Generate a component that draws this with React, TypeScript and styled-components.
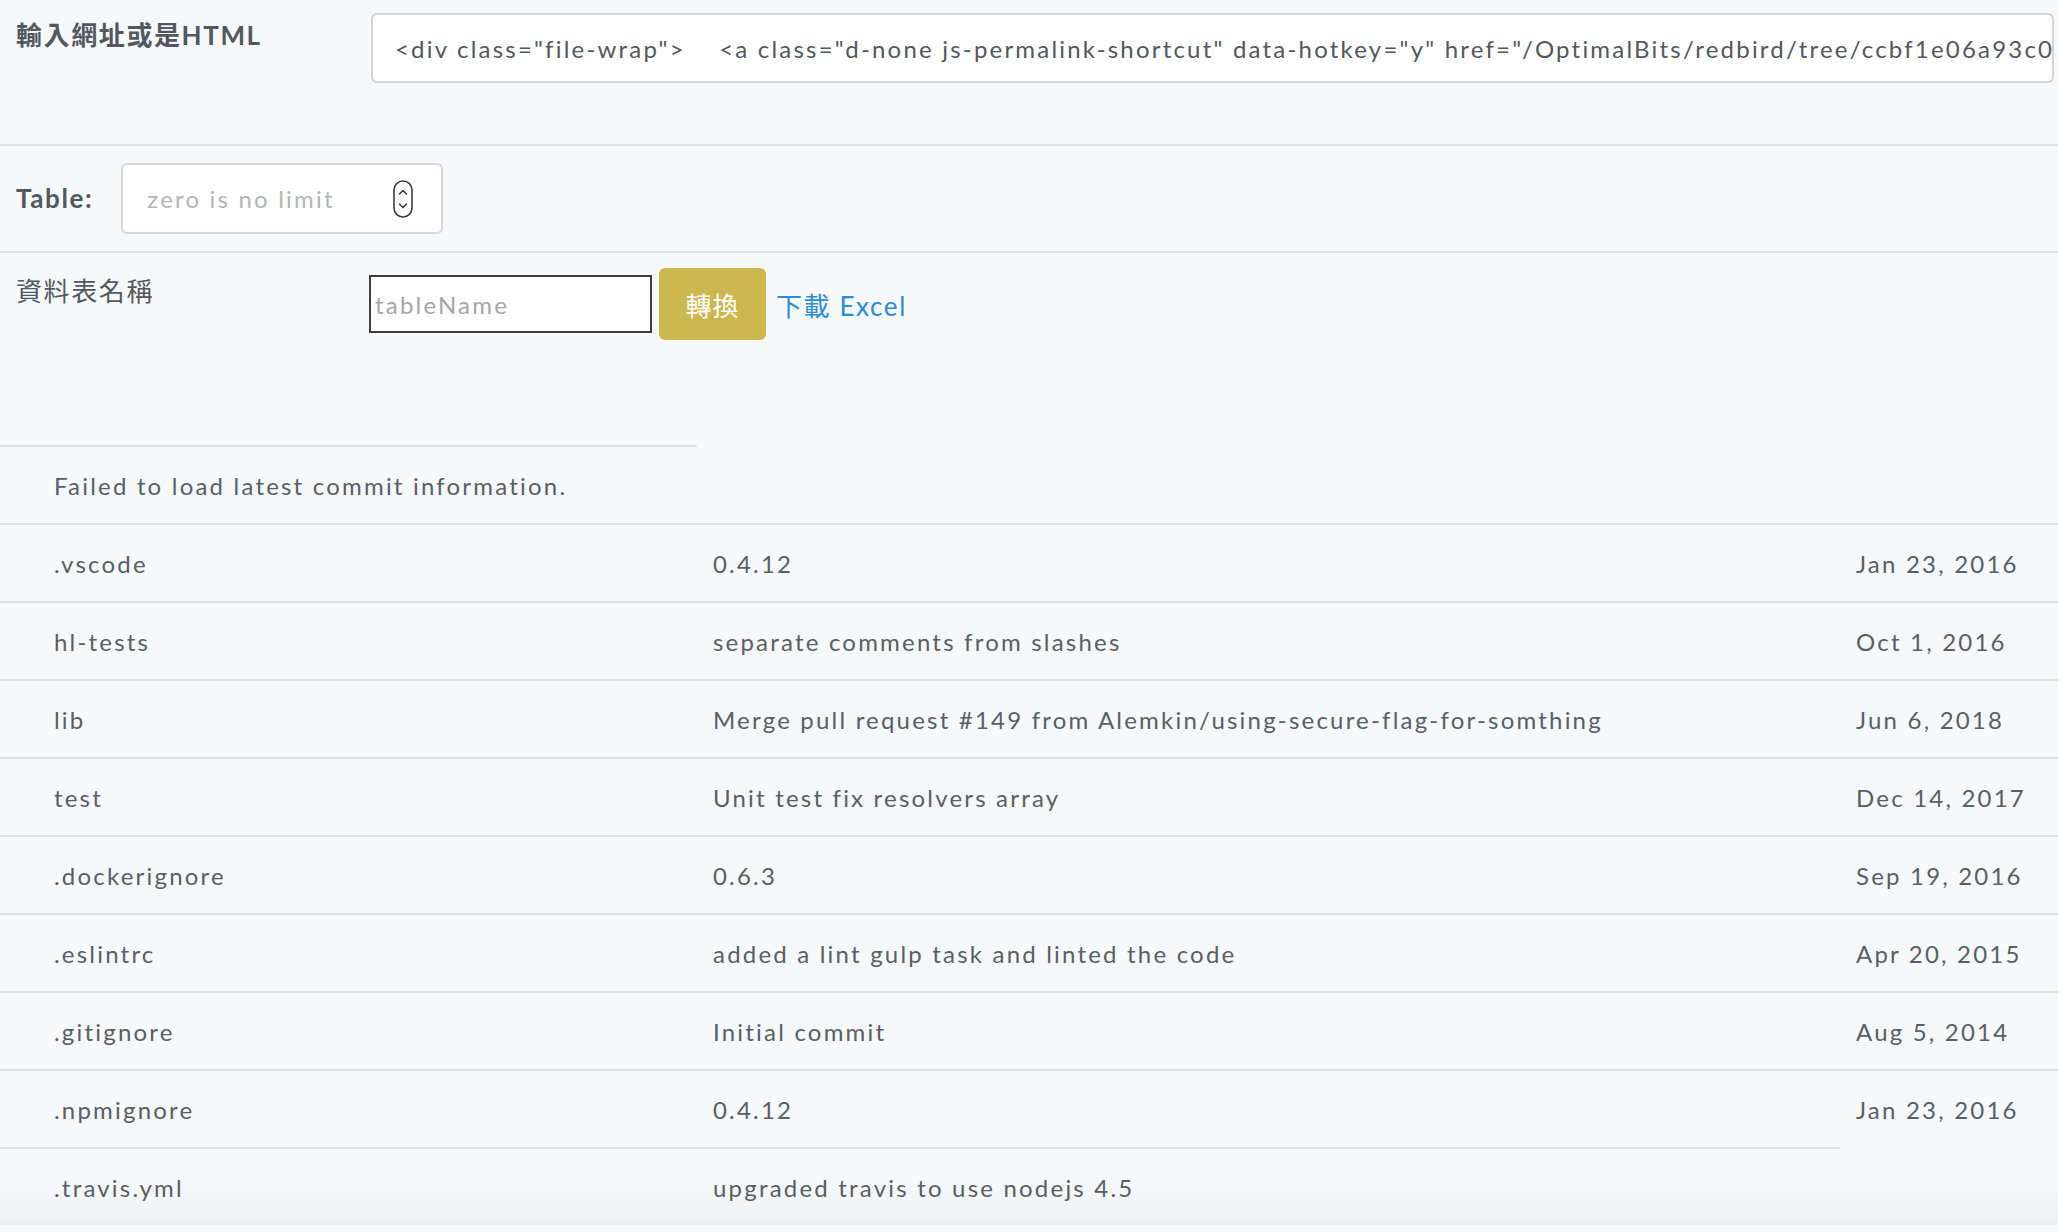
import styled, { createGlobalStyle } from 'styled-components';

const GlobalStyle = createGlobalStyle`
  html, body {
    margin: 0;
    padding: 0;
    background: #f6f8fa;
  }
  body {
    font-family: Lato, "Noto Sans CJK TC", "Noto Sans", sans-serif;
    color: #5a5f65;
  }
`;

const Page = styled.div`
  min-height: 1232px;
  display: flex;
  flex-direction: column;
`;

const FormRow = styled.div<{ $pad: string; $height?: number; $noLine?: boolean }>`
  display: flex;
  align-items: flex-start;
  padding: ${(p) => p.$pad};
  border-bottom: 2px solid ${(p) => (p.$noLine ? 'transparent' : '#dfe2e5')};
  ${(p) => (p.$height ? `height: ${p.$height}px; box-sizing: border-box;` : '')}
`;

const Label = styled.div<{ $bold?: boolean; $width?: number; $top?: number }>`
  font-family: Lato, "Noto Sans CJK TC", sans-serif;
  font-size: 26px;
  letter-spacing: 1.6px;
  font-weight: ${(p) => (p.$bold ? 700 : 400)};
  color: #53585e;
  line-height: 1.3;
  width: ${(p) => (p.$width ? `${p.$width}px` : 'auto')};
  margin-top: ${(p) => p.$top ?? 0}px;
  flex-shrink: 0;
`;

const SourceField = styled.div`
  flex: 1;
  height: 70px;
  box-sizing: border-box;
  background: #fff;
  border: 2px solid #d3d5d8;
  border-radius: 6px;
  padding: 0 16px 0 22px;
  display: flex;
  align-items: center;
  overflow: hidden;
  white-space: pre;
  font-size: 24px;
  letter-spacing: 2.2px;
  color: #53585e;
`;

const InlineRow = styled.div`
  display: flex;
  align-items: center;
  gap: 28px;
`;

const NumberBox = styled.div`
  width: 322px;
  height: 71px;
  box-sizing: border-box;
  background: #fff;
  border: 2px solid #d6d8db;
  border-radius: 6px;
  display: flex;
  align-items: center;
  justify-content: space-between;
  padding: 0 28px 0 24px;
`;

const NumberInput = styled.input`
  border: none;
  outline: none;
  background: transparent;
  font-family: Lato, sans-serif;
  font-size: 24px;
  letter-spacing: 2.2px;
  width: 230px;
  color: #53585e;
  padding: 0;
  &::placeholder {
    color: #b3b5b8;
  }
`;

const ConvertGroup = styled.div`
  display: flex;
  align-items: center;
  margin-top: 15px;
`;

const NameInput = styled.input`
  width: 283px;
  height: 58px;
  box-sizing: border-box;
  border: 2px solid #3d3f42;
  background: #fff;
  font-family: Lato, sans-serif;
  font-size: 24px;
  letter-spacing: 2.2px;
  padding: 0 4px;
  outline: none;
  &::placeholder {
    color: #a4a6a9;
  }
`;

const ConvertButton = styled.button`
  margin-left: 7px;
  width: 107px;
  height: 72px;
  border: none;
  border-radius: 6px;
  background: #cdb74f;
  color: #fff;
  font-family: "Noto Sans CJK TC", sans-serif;
  font-size: 26px;
  letter-spacing: 1px;
  cursor: pointer;
`;

const DownloadLink = styled.a`
  margin-left: 10px;
  color: #2b8dd4;
  font-family: Lato, "Noto Sans CJK TC", sans-serif;
  font-size: 26px;
  letter-spacing: 1.6px;
  text-decoration: none;
`;

const FileTable = styled.table`
  width: 100%;
  border-collapse: collapse;
  table-layout: fixed;
  font-size: 24px;
  letter-spacing: 2.2px;
  color: #5a5f65;
`;

const Cell = styled.td<{ $lined?: boolean; $pad: number }>`
  height: 76px;
  padding: 0 0 0 ${(p) => p.$pad}px;
  border-top: 2px solid ${(p) => (p.$lined ? '#dfe2e5' : 'transparent')};
  white-space: nowrap;
  vertical-align: middle;
`;

const Row = styled.tr<{ $fade?: boolean }>`
  ${(p) => (p.$fade ? 'background: linear-gradient(#f6f8fa 45%, #eef0f2);' : '')}
`;

const files = [
  { name: '.vscode', msg: '0.4.12', date: 'Jan 23, 2016' },
  { name: 'hl-tests', msg: 'separate comments from slashes', date: 'Oct 1, 2016' },
  { name: 'lib', msg: 'Merge pull request #149 from Alemkin/using-secure-flag-for-somthing', date: 'Jun 6, 2018' },
  { name: 'test', msg: 'Unit test fix resolvers array', date: 'Dec 14, 2017' },
  { name: '.dockerignore', msg: '0.6.3', date: 'Sep 19, 2016' },
  { name: '.eslintrc', msg: 'added a lint gulp task and linted the code', date: 'Apr 20, 2015' },
  { name: '.gitignore', msg: 'Initial commit', date: 'Aug 5, 2014' },
  { name: '.npmignore', msg: '0.4.12', date: 'Jan 23, 2016' },
  { name: '.travis.yml', msg: 'upgraded travis to use nodejs 4.5', date: '' },
];

const SOURCE =
  '<div class="file-wrap">    <a class="d-none js-permalink-shortcut" data-hotkey="y" href="/OptimalBits/redbird/tree/ccbf1e06a93c0b1c0b6d3"';

const Stepper = () => (
  <svg width="20" height="38" viewBox="0 0 20 38" fill="none" stroke="#3a3c3f" strokeWidth="1.6" strokeLinecap="round" strokeLinejoin="round">
    <rect x="1" y="1" width="18" height="36" rx="9" />
    <path d="M6.5 14 L10 10.5 L13.5 14" />
    <path d="M6.5 24 L10 27.5 L13.5 24" />
  </svg>
);

export default function App() {
  return (
    <Page>
      <GlobalStyle />
      <FormRow $pad="13px 4px 0 16px" $height={146}>
        <Label $bold $width={355} $top={6}>輸入網址或是HTML</Label>
        <SourceField>{SOURCE}</SourceField>
      </FormRow>
      <FormRow $pad="17px 16px">
        <InlineRow>
          <Label $bold>Table:</Label>
          <NumberBox>
            <NumberInput type="text" placeholder="zero is no limit" />
            <Stepper />
          </NumberBox>
        </InlineRow>
      </FormRow>
      <FormRow $pad="0 0 0 16px" $height={192} $noLine>
        <Label $width={353} $top={22}>資料表名稱</Label>
        <ConvertGroup>
          <NameInput placeholder="tableName" />
          <ConvertButton>轉換</ConvertButton>
          <DownloadLink href="#">下載 Excel</DownloadLink>
        </ConvertGroup>
      </FormRow>
      <FileTable>
        <colgroup>
          <col style={{ width: 697 }} />
          <col style={{ width: 1143 }} />
          <col />
        </colgroup>
        <tbody>
          <tr>
            <Cell $lined $pad={54}>Failed to load latest commit information.</Cell>
            <Cell $pad={16} />
            <Cell $pad={16} />
          </tr>
          {files.map((f, i) => {
            const last = i === files.length - 1;
            return (
              <Row key={f.name} $fade={last}>
                <Cell $lined $pad={54}>{f.name}</Cell>
                <Cell $lined $pad={16}>{f.msg}</Cell>
                <Cell $lined={!last} $pad={16}>{f.date}</Cell>
              </Row>
            );
          })}
        </tbody>
      </FileTable>
    </Page>
  );
}
